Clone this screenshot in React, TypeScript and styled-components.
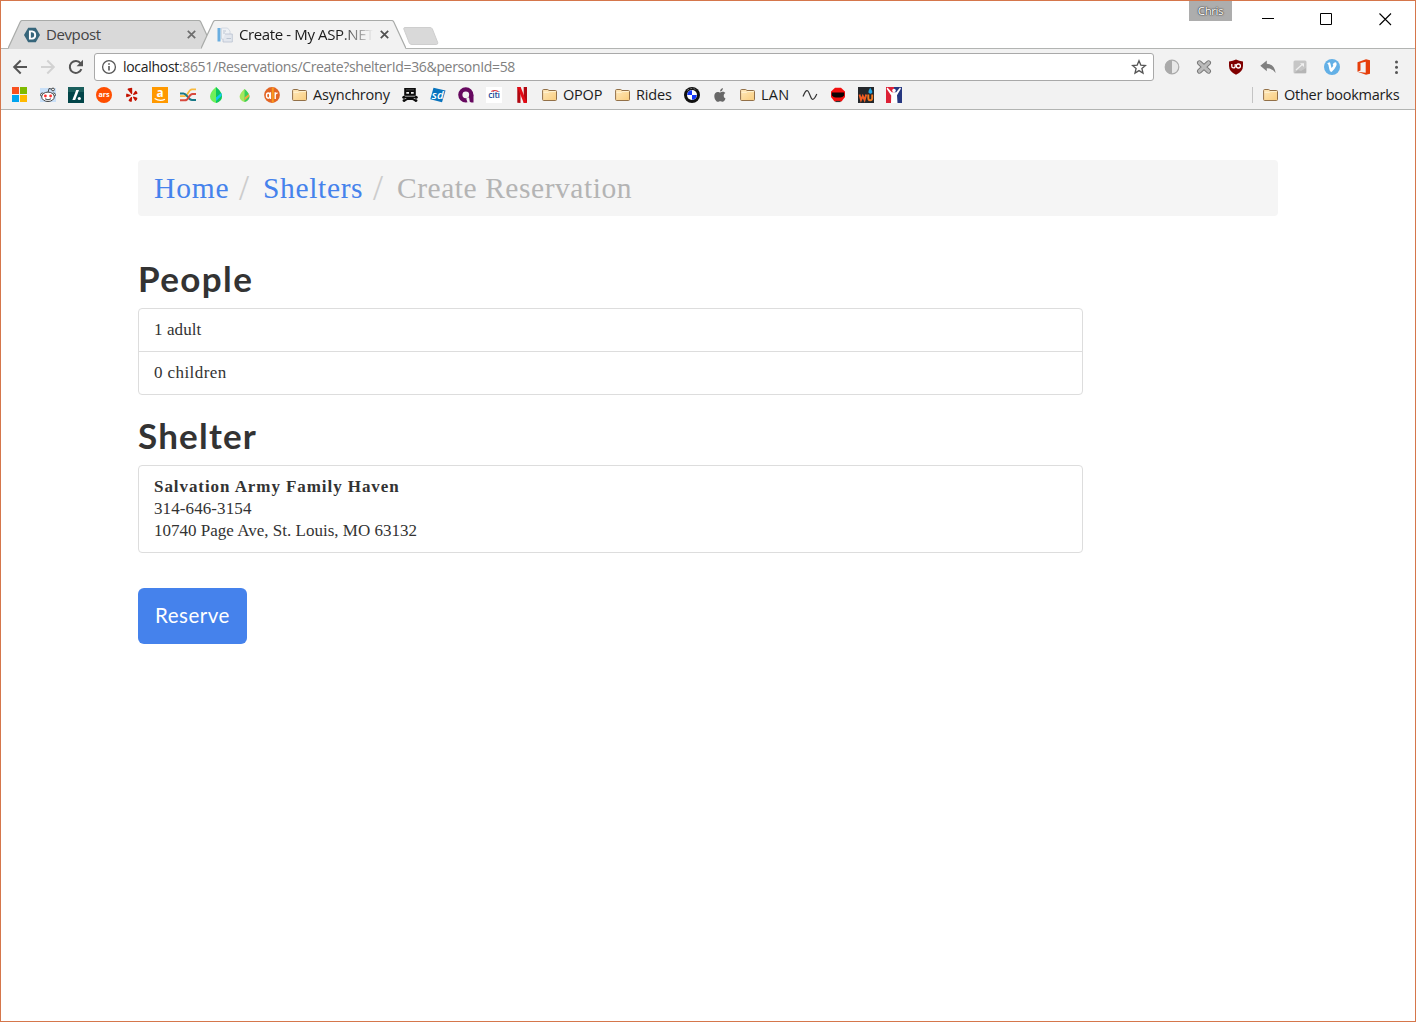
import React from 'react';
import styled, { createGlobalStyle } from 'styled-components';

const ui = `'Open Sans', 'Noto Sans', sans-serif`;
const serif = `'Liberation Serif', serif`;
const heading = `Lato, sans-serif`;

const GlobalStyle = createGlobalStyle`
  * { box-sizing: border-box; }
  body { margin: 0; background: #fff; }
`;

const Window = styled.div`
  width: 1416px;
  height: 1022px;
  border: 1px solid #d5764b;
  background: #fff;
  display: flex;
  flex-direction: column;
  overflow: hidden;
`;

const Text = styled.span<{ $w?: number; $ls?: number; $color?: string }>`
  display: inline-block;
  white-space: nowrap;
  width: ${p => (p.$w ? `${p.$w}px` : 'auto')};
  letter-spacing: ${p => p.$ls ?? 0}px;
  color: ${p => p.$color ?? 'inherit'};
`;

/* ---------- tab strip ---------- */
const TabStrip = styled.header`
  height: 48px;
  flex: none;
  display: flex;
  justify-content: space-between;
  align-items: flex-start;
  border-bottom: 1px solid #b2b4b2;
  font: 15px/20px ${ui};
`;
const Tabs = styled.div`
  display: flex;
  padding: 19px 0 0 7px;
`;
const TabBox = styled.div<{ $active?: boolean }>`
  position: relative;
  z-index: ${p => (p.$active ? 2 : 1)};
  width: 205px;
  height: 29px;
  flex: none;
  margin-left: ${p => (p.$active ? -12 : 0)}px;
  padding: 0 17px 0 16px;
  display: flex;
  align-items: center;
  gap: 6px;
  color: ${p => (p.$active ? '#1a1a1a' : '#444')};
`;
const TabShape = styled.svg`
  position: absolute;
  inset: 0;
  z-index: -1;
`;
const TabTitle = styled.div<{ $fade?: boolean }>`
  flex: 1;
  overflow: hidden;
  white-space: nowrap;
  height: 20px;
  margin-bottom: 1px;
  ${p => p.$fade && 'mask-image: linear-gradient(90deg, #000 102px, transparent 134px);'}
`;
const NewTab = styled.svg`
  margin: 7px 0 0 -3px;
`;
const Controls = styled.div`
  display: flex;
  align-items: flex-start;
`;
const UserBadge = styled.div`
  width: 43px;
  height: 20px;
  background: #adadad;
  color: #fff;
  font: 11.5px/20px ${ui};
  text-align: center;
  text-shadow: 0 0 1px #333, 0 0 1px #444, 0 0 2px #555;
  letter-spacing: -0.4px;
  margin-right: 30px;
`;
const ControlIcon = styled.svg`
  margin: 11px 45px 0 0;
  &:last-child { margin: 12px 23px 0 1px; }
`;

/* ---------- toolbar ---------- */
const Toolbar = styled.div`
  height: 32px;
  flex: none;
  background: #f2f2f2;
  display: flex;
  align-items: center;
  padding: 4px 10px 0 11px;
`;
const NavButtons = styled.div`
  display: flex;
  gap: 12px;
  width: 82px;
`;
const Omnibox = styled.div`
  width: 1060px;
  height: 28px;
  background: #fff;
  border: 1px solid #a9a9a9;
  border-radius: 3px;
  display: flex;
  align-items: center;
  padding: 0 6px 0 6px;
  font: 14px/20px ${ui};
  color: #808080;
`;
const Url = styled.div`
  flex: 1;
  padding-left: 6px;
  white-space: nowrap;
`;
const Extensions = styled.div`
  display: flex;
  gap: 16px;
  margin-left: 10px;
`;

/* ---------- bookmarks ---------- */
const BookmarkBar = styled.nav`
  height: 29px;
  flex: none;
  background: #f2f2f2;
  border-bottom: 1px solid #b2b4b2;
  display: flex;
  align-items: center;
  gap: 12px;
  padding: 0 15px 1px 11px;
  font: 14.5px/20px ${ui};
  color: #1c1c1c;
`;
const Folder = styled.div`
  display: flex;
  align-items: center;
  gap: 5px;
`;
const Other = styled(Folder)`
  margin-left: auto;
  padding-left: 10px;
  border-left: 1px solid #c4c4c4;
  height: 16px;
`;

/* ---------- page ---------- */
const Page = styled.main`
  width: 1140px;
  margin: 50px 0 0 137px;
  color: #333;
`;
const Breadcrumb = styled.div`
  height: 56px;
  background: #f5f5f5;
  border-radius: 4px;
  padding: 0 16px;
  display: flex;
  font: 29.5px/57px ${serif};
  color: #b4b4b4;
`;
const Crumb = styled.a<{ $w: number; $ls: number }>`
  width: ${p => p.$w}px;
  letter-spacing: ${p => p.$ls}px;
  color: #4582ec;
  white-space: nowrap;
`;
const Slash = styled.span`
  width: 34px;
  padding-left: 10px;
  color: #ccc;
  font-size: 36px;
`;
const Section = styled.section`
  width: 945px;
`;
const Title = styled.h2<{ $ls: number; $top: number }>`
  margin: ${p => p.$top}px 0 11px;
  font: bold 35px/38px ${heading};
  letter-spacing: ${p => p.$ls}px;
`;
const List = styled.div`
  border: 1px solid #ddd;
  border-radius: 4px;
  font: 17px/22px ${serif};
`;
const Item = styled.div`
  padding: 10px 15px;
  & + & { border-top: 1px solid #ddd; }
`;
const Line = styled.div<{ $bold?: boolean; $ls: number }>`
  font-weight: ${p => (p.$bold ? 700 : 400)};
  letter-spacing: ${p => p.$ls}px;
  white-space: nowrap;
`;
const Reserve = styled.button`
  display: block;
  margin-top: 35px;
  width: 109px;
  height: 56px;
  padding: 0 0 2px;
  border: 0;
  border-radius: 6px;
  background: #4582ec;
  color: #fff;
  font: 20.5px/54px ${heading};
  letter-spacing: 0.5px;
`;

/* ---------- icons ---------- */
const IconSvg = styled.svg`
  flex: none;
`;
const Icon = ({ children }: { children: React.ReactNode }) => (
  <IconSvg width="16" height="16" viewBox="0 0 16 16">{children}</IconSvg>
);
const Glyph = styled.text<{ $weight?: number }>`
  font-family: ${ui};
  font-weight: ${p => p.$weight ?? 700};
  text-anchor: middle;
`;

const CloseX = ({ color }: { color: string }) => (
  <IconSvg width="9" height="9" viewBox="0 0 9 9">
    <path d="M.8.8l7.4 7.4M8.2.8L.8 8.2" stroke={color} strokeWidth="1.7" />
  </IconSvg>
);

const Shape = ({ fill }: { fill: string }) => (
  <TabShape width="205" height="29" viewBox="0 0 205 29">
    <path d="M0 29L12.2 2Q13 .5 14.5.5H190.5Q192 .5 192.8 2L205 29Z" fill={fill} />
    <path d="M0 28.5L12.2 2Q13 .5 14.5.5H190.5Q192 .5 192.8 2L205 28.5" fill="none" stroke="#a9aba9" strokeWidth="1.2" />
  </TabShape>
);

const FolderIcon = () => (
  <Icon>
    <defs>
      <linearGradient id="folder" x1="0" y1="0" x2="1" y2="1">
        <stop offset="0" stopColor="#ffe9bd" />
        <stop offset="1" stopColor="#f9cd7d" />
      </linearGradient>
    </defs>
    <path d="M.6 12.5V3.5Q.6 2.5 1.6 2.5H5.6Q6.4 2.5 6.6 3.3L6.8 3.5H13.5Q14.5 3.5 14.5 4.5V12.5Q14.5 13.5 13.5 13.5H1.6Q.6 13.5.6 12.5Z" fill="url(#folder)" stroke="#927048" />
    <path d="M1.5 5.3H6.5L7.3 4.6H13.8" fill="none" stroke="#fff3d4" />
  </Icon>
);

const Microsoft = () => (
  <Icon>
    <path d="M0 0h7v7H0z" fill="#f8501f" /><path d="M8 0h7v7H8z" fill="#7fba00" />
    <path d="M0 8h7v7H0z" fill="#00a4ef" /><path d="M8 8h7v7H8z" fill="#ffb900" />
  </Icon>
);
const Reddit = () => (
  <Icon>
    <path d="M0 1h16v14H0z" fill="#c9e0f8" />
    <path d="M8 5.5L9 1.5 12 2.2" fill="none" stroke="#444" />
    <circle cx="13" cy="2.5" r="1.4" fill="#fff" stroke="#444" />
    <circle cx="2.4" cy="7.8" r="1.8" fill="#fff" stroke="#444" /><circle cx="13.6" cy="7.8" r="1.8" fill="#fff" stroke="#444" />
    <ellipse cx="8" cy="9.8" rx="6.3" ry="4.7" fill="#fff" stroke="#444" />
    <circle cx="5.4" cy="9" r="1.4" fill="#f33" /><circle cx="10.6" cy="9" r="1.4" fill="#f33" />
    <path d="M5 11.8Q8 13.8 11 11.8" fill="none" stroke="#444" />
  </Icon>
);
const Slashdot = () => (
  <Icon>
    <path d="M0 0h16v16H0z" fill="#024549" /><path d="M0 0h16v5H0z" fill="#1a5f5d" />
    <path d="M8.2 3H11L7.2 13H4.4z" fill="#fff" /><circle cx="11.3" cy="11.5" r="1.6" fill="#fff" />
  </Icon>
);
const Ars = () => (
  <Icon><circle cx="8" cy="8" r="8" fill="#ff4e00" /><Glyph x="8" y="10.2" fontSize="7.2" fill="#fff">ars</Glyph></Icon>
);
const Yelp = () => (
  <Icon>
    <g fill="#c41200">
      <path d="M4 1.6L7.6.8Q8.2.8 8.2 1.6V6.6Q8 7.8 7.2 6.9L3.7 2.6Q3.5 1.9 4 1.6Z" />
      <path d="M2.7 6.4L6.5 8Q7.1 8.5 6.5 9L2.6 10.2Q2 10.1 2.1 8.3Q2.2 6.5 2.7 6.4Z" />
      <path d="M7.7 9.9Q8.2 10 8.1 11L7.8 14.6Q7.4 15.2 5.7 14.4Q4.4 13.8 4.5 13.3L7 10.1Z" />
      <path d="M9.6 9.5L13.2 10.8Q13.7 11.2 12.8 12.7Q11.7 14.1 11.2 13.9L9 10.5Q8.9 9.5 9.6 9.5Z" />
      <path d="M9 7.2L11.2 4Q11.9 3.5 12.8 4.8Q13.8 6.4 13.4 6.8L9.8 8Q8.8 8 9 7.2Z" />
    </g>
  </Icon>
);
const Amazon = () => (
  <Icon>
    <path d="M0 0h16v16H0z" fill="#f90" />
    <Glyph x="8" y="10.4" fontSize="11.7" fill="#fff">a</Glyph>
    <path d="M2.6 11.6Q8 14.8 13 12.2" fill="none" stroke="#fff" strokeWidth="1.2" />
  </Icon>
);
const Strands = () => (
  <Icon>
    <path d="M0 9.2H5C7.5 9.2 8.5 2.3 12 2.3H16" fill="none" stroke="#f9b93c" strokeWidth="1.8" />
    <path d="M0 6.4H3.5C7.5 6.4 7.5 13 12 13H16" fill="none" stroke="#177886" strokeWidth="2" />
    <path d="M0 13.3H5C9 13.3 8.5 7 12.5 7H16" fill="none" stroke="#d8493d" strokeWidth="2" />
  </Icon>
);
const Leaf = ({ small }: { small?: boolean }) => (
  <Icon>
    <g transform={small ? 'translate(2 2) scale(.82)' : undefined}>
      <path d="M8 0Q14 5.2 14 9.6Q13.6 14.6 8 16Q2.2 14.6 2 9.6Q2 5.2 8 0Z" fill={small ? '#a5e85f' : '#6ff05a'} />
      <path d="M8 0Q14 5.2 14 9.6Q13.6 14.6 8 16Z" fill={small ? '#39d05b' : '#0cc75f'} />
      <path d="M8 10.5L13.5 5.8V9L8 14Z" fill={small ? '#edac3c' : '#12c7ef'} />
    </g>
  </Icon>
);
const Air = () => (
  <Icon>
    <circle cx="8" cy="8" r="7.9" fill="#e36525" /><path d="M7.8 .5H9.8V15.5H7.8z" fill="#f89a1e" />
    <ellipse cx="4.2" cy="8.6" rx="1.7" ry="2.6" fill="none" stroke="#fff" strokeWidth="1.4" />
    <path d="M6.4 5.2V12M11.2 12V5.2M11.2 8Q11.7 5.8 13.6 6.2" fill="none" stroke="#fff" strokeWidth="1.4" />
  </Icon>
);
const Rig = () => (
  <Icon>
    <path d="M2.2 1H13.8V8.8H2.2Z" fill="#0b0b0b" />
    <path d="M4 2.8H12" stroke="#555" strokeWidth=".8" />
    <path d="M4.3 5H7V6.8H4.3ZM9 5H11.7V6.8H9Z" fill="#eee" />
    <path d="M1.4 10.4H14.6M2 13.8L5.5 12H10.5L14 13.8" fill="none" stroke="#0b0b0b" strokeWidth="1.9" />
    <circle cx="1.8" cy="10.3" r="1.5" fill="#0b0b0b" /><circle cx="14.2" cy="10.3" r="1.5" fill="#0b0b0b" />
    <circle cx="2" cy="13.6" r="1.4" fill="#0b0b0b" /><circle cx="14" cy="13.6" r="1.4" fill="#0b0b0b" />
  </Icon>
);
const Sd = () => (
  <Icon>
    <path d="M3.5 .8L15.5 3.6 12 15.2 .3 12.3Z" fill="#0873bd" />
    <Glyph x="7.8" y="12" fontSize="11.5" fill="#fff" fontStyle="italic" $weight={600}>sd</Glyph>
  </Icon>
);
const Ring = () => (
  <Icon>
    <circle cx="7.8" cy="7.8" r="5.5" fill="none" stroke="#66085f" strokeWidth="4.2" />
    <path d="M11.2 7.8H15.5V15.6H13.6Q11.2 15.2 11.2 12Z" fill="#66085f" />
    <path d="M8.2 11.4L11 10.2 11.8 14.6 9.6 15.8Z" fill="#f2f2f2" />
  </Icon>
);
const Citi = () => (
  <Icon>
    <path d="M0 0h16v16H0z" fill="#fff" />
    <Glyph x="8" y="11.4" fontSize="8.8" fill="#1e4c9a" $weight={600} letterSpacing="-.3">citi</Glyph>
    <path d="M5.4 4.6Q8.6 2.4 12 4.6" fill="none" stroke="#e0303a" strokeWidth="1.2" />
  </Icon>
);
const Netflix = () => (
  <Icon>
    <path d="M3.3 0H6.5V16L3.3 15.7zM9.7 0H13V15.7L9.7 16z" fill="#b00710" /><path d="M3.3 0H6.6L13 15.8 9.8 16z" fill="#e50914" />
  </Icon>
);
const Bmw = () => (
  <Icon>
    <circle cx="8" cy="8" r="8" fill="#111" /><path d="M3.2 3.4Q8-.4 12.8 3.4" fill="none" stroke="#999" strokeWidth=".8" strokeDasharray="2 1.4" />
    <circle cx="8" cy="8" r="5" fill="#fff" />
    <path d="M8 8V3.2A4.8 4.8 0 0 0 3.2 8ZM8 8V12.8A4.8 4.8 0 0 0 12.8 8Z" fill="#1236f8" />
  </Icon>
);
const Apple = () => (
  <Icon>
    <path d="M8.1 4.6C8 2.7 9.3 1.2 10.9 1 11 2.9 9.6 4.4 8.1 4.6ZM13.5 11.5C12.7 13.6 11.6 14.8 10.6 14.8 9.7 14.8 9.3 14.3 8.3 14.3S6.8 14.8 6 14.8C4.3 14.8 2.3 11.9 2.3 8.9 2.3 6.3 4 4.9 5.7 4.9 6.8 4.9 7.5 5.5 8.2 5.5S9.8 4.8 11 4.8C12 4.8 12.9 5.4 13.4 6.1 11 7.5 11.4 10.7 13.5 11.5Z" fill="#686868" />
  </Icon>
);
const Wave = () => (
  <Icon><path d="M1 9.5C3 5 4 3 5.6 3.8S8.6 11.5 10.2 12.2 13 11 14.8 7" fill="none" stroke="#333" strokeWidth="1.2" /></Icon>
);
const Mask = () => (
  <Icon>
    <path d="M5 .8H11L15 4.5V10L11.5 14.5H4.5L1 10V4.5Z" fill="#f20d0d" />
    <path d="M1.8 5.6H14.2V8.5Q12 11 9.5 10.5H6.5Q4 11 1.8 8.5Z" fill="#0a0303" />
    <path d="M5.5 14.5H10.5" stroke="#333" strokeWidth="1.2" />
  </Icon>
);
const Wu = () => (
  <Icon>
    <path d="M0 0h16v16H0z" fill="#24272b" />
    <path d="M1.5 7.5L3 13 4.8 9 6.6 13 8.2 7.5" fill="none" stroke="#f25c22" strokeWidth="1.9" />
    <path d="M10.3 7.5V11.2Q10.3 13.3 12.2 13.3T14.2 11.2V7.5" fill="none" stroke="#f47b20" strokeWidth="1.9" />
    <path d="M12.2 .8Q14.9 4.4 14.2 5.8Q12.5 7.5 10.6 5.8Q9.9 4.4 12.2 .8Z" fill="#22a7e5" />
  </Icon>
);
const Figure = () => (
  <Icon>
    <path d="M0 0H8V16H0z" fill="#dc2035" /><path d="M8 0H16V16H8z" fill="#263780" />
    <path d="M1.5 .5L5.8 5.3H10.2L14 .5 15 1.5 11 8.2 11.5 16H5L5.2 8.5 .6 1.8Z" fill="#fff" /><circle cx="8" cy="3.6" r="1.8" fill="#fff" />
  </Icon>
);

const Bookmark = ({ label, w, ls }: { label: string; w: number; ls: number }) => (
  <Folder><FolderIcon /><Text $w={w} $ls={ls}>{label}</Text></Folder>
);

export default function App() {
  return (
    <Window>
      <GlobalStyle />
      <TabStrip>
        <Tabs>
          <TabBox>
            <Shape fill="#d9d9d9" />
            <Icon>
              <path d="M4.2.8H11.8L16 8 11.8 15.2H4.2L0 8Z" fill="#37667b" />
              <path d="M5.9 4.4H8Q11.2 4.6 11.2 8T8 11.6H5.9Z" fill="none" stroke="#fff" strokeWidth="1.9" />
            </Icon>
            <TabTitle><Text $ls={-0.4}>Devpost</Text></TabTitle>
            <CloseX color="#6d6d6d" />
          </TabBox>
          <TabBox $active>
            <Shape fill="#f2f2f2" />
            <Icon>
              <path d="M.5 1H3.5V14.5H.5z" fill="#6aaee0" />
              <path d="M4.5 1H10.5L13 4V12H4.5z" fill="#eef1f5" stroke="#ccd3dd" strokeWidth=".8" />
              <path d="M8 7H15.3V15H6V12" fill="#e3e7ee" stroke="#b9c2d0" strokeWidth=".8" />
              <path d="M6 4H9M6 6H8M9.5 11.5H14" stroke="#bcc5d2" />
            </Icon>
            <TabTitle $fade><Text $ls={-0.38}>Create - My ASP.NET</Text></TabTitle>
            <CloseX color="#505050" />
          </TabBox>
          <NewTab width="36" height="19" viewBox="0 0 36 19">
            <path d="M2 .5H27Q28.7.5 29.4 2L34.7 15.5Q35 17.5 33.5 17.5H9Q7 17.5 6.3 16L.8 2Q.5.5 2 .5Z" fill="#d9d9d9" stroke="#cecece" />
          </NewTab>
        </Tabs>
        <Controls>
          <UserBadge>Chris</UserBadge>
          <ControlIcon width="13" height="13"><path d="M0 6.5H12" stroke="#000" /></ControlIcon>
          <ControlIcon width="13" height="13"><path d="M.5 1.5H11.5V12.5H.5Z" fill="none" stroke="#000" /></ControlIcon>
          <ControlIcon width="13" height="13"><path d="M.5.5L12 12M12 .5L.5 12" stroke="#000" strokeWidth="1.1" /></ControlIcon>
        </Controls>
      </TabStrip>

      <Toolbar>
        <NavButtons>
          <Icon><path d="M15 8H2.5M8.7 1.5L2.2 8 8.7 14.5" fill="none" stroke="#555" strokeWidth="2" /></Icon>
          <Icon><path d="M1 8H13.5M7.3 1.5L13.8 8 7.3 14.5" fill="none" stroke="#d2d2d2" strokeWidth="2" /></Icon>
          <Icon>
            <path d="M13.4 10.2A6 6 0 1 1 12.6 4.3" fill="none" stroke="#555" strokeWidth="2" />
            <path d="M15 .8V7.3H8.6Z" fill="#555" />
          </Icon>
        </NavButtons>
        <Omnibox>
          <Icon>
            <circle cx="8" cy="8" r="6.4" fill="none" stroke="#555" strokeWidth="1.3" />
            <path d="M8 7V11.6M8 4.2V5.8" stroke="#555" strokeWidth="1.6" />
          </Icon>
          <Url><Text $ls={-0.34}><Text $color="#222" $ls={-0.3}>localhost</Text>:8651/Reservations/Create?shelterId=36&amp;personId=58</Text></Url>
          <Icon><path d="M8 1.8L9.8 6.1 14.5 6.5 10.9 9.5 12 14.1 8 11.6 4 14.1 5.1 9.5 1.5 6.5 6.2 6.1Z" fill="none" stroke="#555" strokeWidth="1.3" /></Icon>
        </Omnibox>
        <Extensions>
          <Icon><circle cx="8" cy="8" r="6.8" fill="#e8e8e8" stroke="#aaa" strokeWidth="1.2" /><path d="M8 1A7 7 0 0 0 8 15Z" fill="#aaa" /></Icon>
          <Icon>
            <path d="M3.5 3.8L12.5 12.2M12.5 3.8L3.5 12.2" stroke="#777" strokeWidth="5" strokeLinecap="round" />
            <path d="M3.5 3.8L12.5 12.2M12.5 3.8L3.5 12.2" stroke="#bbb" strokeWidth="3.2" strokeLinecap="round" />
          </Icon>
          <Icon>
            <path d="M8 .5Q11 2.3 15 2.4V7Q15 12.5 8 15.7Q1 12.5 1 7V2.4Q5 2.3 8 .5Z" fill="#800000" />
            <path d="M3.8 5V7.2Q3.8 8.9 5.5 8.9T7.2 7.2V5" fill="none" stroke="#fff" strokeWidth="1.3" /><circle cx="10.4" cy="7" r="2" fill="none" stroke="#fff" strokeWidth="1.3" />
          </Icon>
          <Icon><path d="M.3 6.8L6.8 1.5V4.7Q14.3 5 15.6 14Q12.5 9.2 6.8 9.3V12.3Z" fill="#808080" /></Icon>
          <Icon>
            <rect x="1.5" y="1.5" width="13" height="13" rx="1.5" fill="#c6c6c6" />
            <path d="M4 11L10.5 5.2" fill="none" stroke="#eee" strokeWidth="1.3" /><path d="M8 4.2H12V8Z" fill="#f0f0f0" /><path d="M2.5 14L6 11 9 12 14 9V14Z" fill="#b5b5b5" />
          </Icon>
          <Icon>
            <circle cx="8" cy="8" r="8" fill="#63b0e6" />
            <path d="M3.2 4.2L5 3.4Q6.2 3 6.5 5L7.5 9Q10.4 6 8.6 5.9Q9.5 2.7 12.2 3.4Q14.2 6.2 7.8 12.8Q5.8 13.5 5.3 10L4.4 5.8Z" fill="#fff" />
          </Icon>
          <Icon><path d="M1.5 3.3L10 .2 14 1.3V14.7L10 15.8 1.5 12.8 9.7 13.7V2.8L4.5 4V11.5L1.5 12.7Z" fill="#e63e0a" /></Icon>
          <Icon><g fill="#555"><circle cx="8.5" cy="3" r="1.5" /><circle cx="8.5" cy="8.2" r="1.5" /><circle cx="8.5" cy="13.4" r="1.5" /></g></Icon>
        </Extensions>
      </Toolbar>

      <BookmarkBar>
        <Microsoft /><Reddit /><Slashdot /><Ars /><Yelp /><Amazon /><Strands /><Leaf /><Leaf small /><Air />
        <Bookmark label="Asynchrony" w={77} ls={-0.2} />
        <Rig /><Sd /><Ring /><Citi /><Netflix />
        <Bookmark label="OPOP" w={40} ls={-0.2} />
        <Bookmark label="Rides" w={36} ls={-0.15} />
        <Bmw /><Apple />
        <Bookmark label="LAN" w={29} ls={0.2} />
        <Wave /><Mask /><Wu /><Figure />
        <Other><FolderIcon /><Text $w={116} $ls={-0.25}>Other bookmarks</Text></Other>
      </BookmarkBar>

      <Page>
        <Breadcrumb>
          <Crumb $w={75} $ls={0.85}>Home</Crumb><Slash>/</Slash>
          <Crumb $w={100} $ls={0.65}>Shelters</Crumb><Slash>/</Slash>
          <Text $ls={0.54}>Create Reservation</Text>
        </Breadcrumb>
        <Section>
          <Title $top={43} $ls={1.4}>People</Title>
          <List>
            <Item><Line $ls={0.1}>1 adult</Line></Item>
            <Item><Line $ls={0.42}>0 children</Line></Item>
          </List>
          <Title $top={21} $ls={1.2}>Shelter</Title>
          <List>
            <Item>
              <Line $bold $ls={0.93}>Salvation Army Family Haven</Line>
              <Line $ls={0.1}>314-646-3154</Line>
              <Line $ls={0.01}>10740 Page Ave, St. Louis, MO 63132</Line>
            </Item>
          </List>
          <Reserve>Reserve</Reserve>
        </Section>
      </Page>
    </Window>
  );
}
